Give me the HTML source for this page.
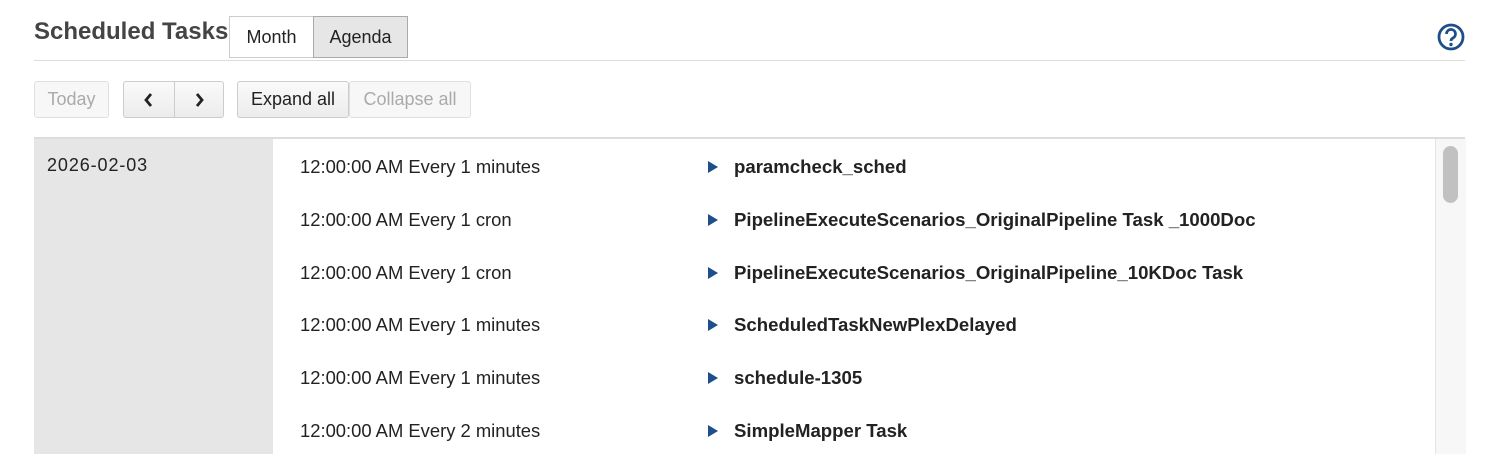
<!DOCTYPE html>
<html><head><style>
body{margin:0;width:1488px;height:454px;overflow:hidden;background:#fff;font-family:"Liberation Sans",sans-serif;color:#222;position:relative}
.a{position:absolute}
.title{left:34px;top:18px;font-size:24px;font-weight:bold;color:#444}
.tab{top:16px;height:42px;box-sizing:border-box;border:1px solid #ccc;font-size:18px;line-height:40px;text-align:center}
.btn{top:81px;height:37px;box-sizing:border-box;border:1px solid #ccc;border-radius:3px;font-size:18px;line-height:35px;text-align:center;background:linear-gradient(#fafafa,#ececec)}
.dis{color:#aaa;background:#f7f7f7;border-color:#e0e0e0}
.row{font-size:18.4px;left:300px}
.name{font-size:18.6px;font-weight:bold;left:734px}
.tri{left:708px;width:0;height:0;border-left:10px solid #1f4e8c;border-top:6px solid transparent;border-bottom:6px solid transparent}
</style></head><body>
<div class="a title">Scheduled Tasks</div>
<div class="a tab" style="left:229px;width:85px;background:#fff">Month</div>
<div class="a tab" style="left:313px;width:95px;background:#e6e6e6;border-color:#aaa">Agenda</div>
<svg class="a" style="left:1437px;top:23px" width="28" height="28" viewBox="0 0 28 28"><circle cx="14" cy="14" r="12" fill="none" stroke="#1f4e8c" stroke-width="2.8"/><path d="M9.5 11a4.5 4.5 0 1 1 6.5 4c-1.5.8-2 1.5-2 3" fill="none" stroke="#1f4e8c" stroke-width="2.8"/><circle cx="14" cy="21.5" r="1.7" fill="#1f4e8c"/></svg>
<div class="a" style="left:34px;top:60px;width:1431px;height:1px;background:#ddd"></div>
<div class="a btn dis" style="left:34px;width:75px">Today</div>
<div class="a btn" style="left:123px;width:52px;border-radius:3px 0 0 3px"><svg width="14" height="16" viewBox="0 0 14 16" style="margin-top:10px"><path d="M9 2L4 8l5 6" fill="none" stroke="#222" stroke-width="2.8"/></svg></div>
<div class="a btn" style="left:174px;width:50px;border-radius:0 3px 3px 0"><svg width="14" height="16" viewBox="0 0 14 16" style="margin-top:10px"><path d="M5 2l5 6-5 6" fill="none" stroke="#222" stroke-width="2.8"/></svg></div>
<div class="a btn" style="left:237px;width:112px">Expand all</div>
<div class="a btn dis" style="left:349px;width:122px">Collapse all</div>
<div class="a" style="left:34px;top:137px;width:1431px;height:2px;background:#ddd"></div>
<div class="a" style="left:34px;top:139px;width:239px;height:315px;background:#e6e6e6"></div>
<div class="a" style="left:47px;top:155px;font-size:18px;letter-spacing:0.9px">2026-02-03</div>
<div class="a" style="left:1435px;top:139px;width:30px;height:315px;background:#f7f7f7;border-left:1px solid #e4e4e4"></div>
<div class="a" style="left:1443px;top:146px;width:15px;height:57px;border-radius:8px;background:#c1c1c1"></div>

<div class="a row" style="top:156px">12:00:00 AM Every 1 minutes</div><div class="a tri" style="top:161px"></div><div class="a name" style="top:156px">paramcheck_sched</div>
<div class="a row" style="top:209px">12:00:00 AM Every 1 cron</div><div class="a tri" style="top:214px"></div><div class="a name" style="top:209px">PipelineExecuteScenarios_OriginalPipeline Task _1000Doc</div>
<div class="a row" style="top:262px">12:00:00 AM Every 1 cron</div><div class="a tri" style="top:267px"></div><div class="a name" style="top:262px">PipelineExecuteScenarios_OriginalPipeline_10KDoc Task</div>
<div class="a row" style="top:314px">12:00:00 AM Every 1 minutes</div><div class="a tri" style="top:319px"></div><div class="a name" style="top:314px">ScheduledTaskNewPlexDelayed</div>
<div class="a row" style="top:367px">12:00:00 AM Every 1 minutes</div><div class="a tri" style="top:372px"></div><div class="a name" style="top:367px">schedule-1305</div>
<div class="a row" style="top:420px">12:00:00 AM Every 2 minutes</div><div class="a tri" style="top:425px"></div><div class="a name" style="top:420px">SimpleMapper Task</div>
</body></html>
